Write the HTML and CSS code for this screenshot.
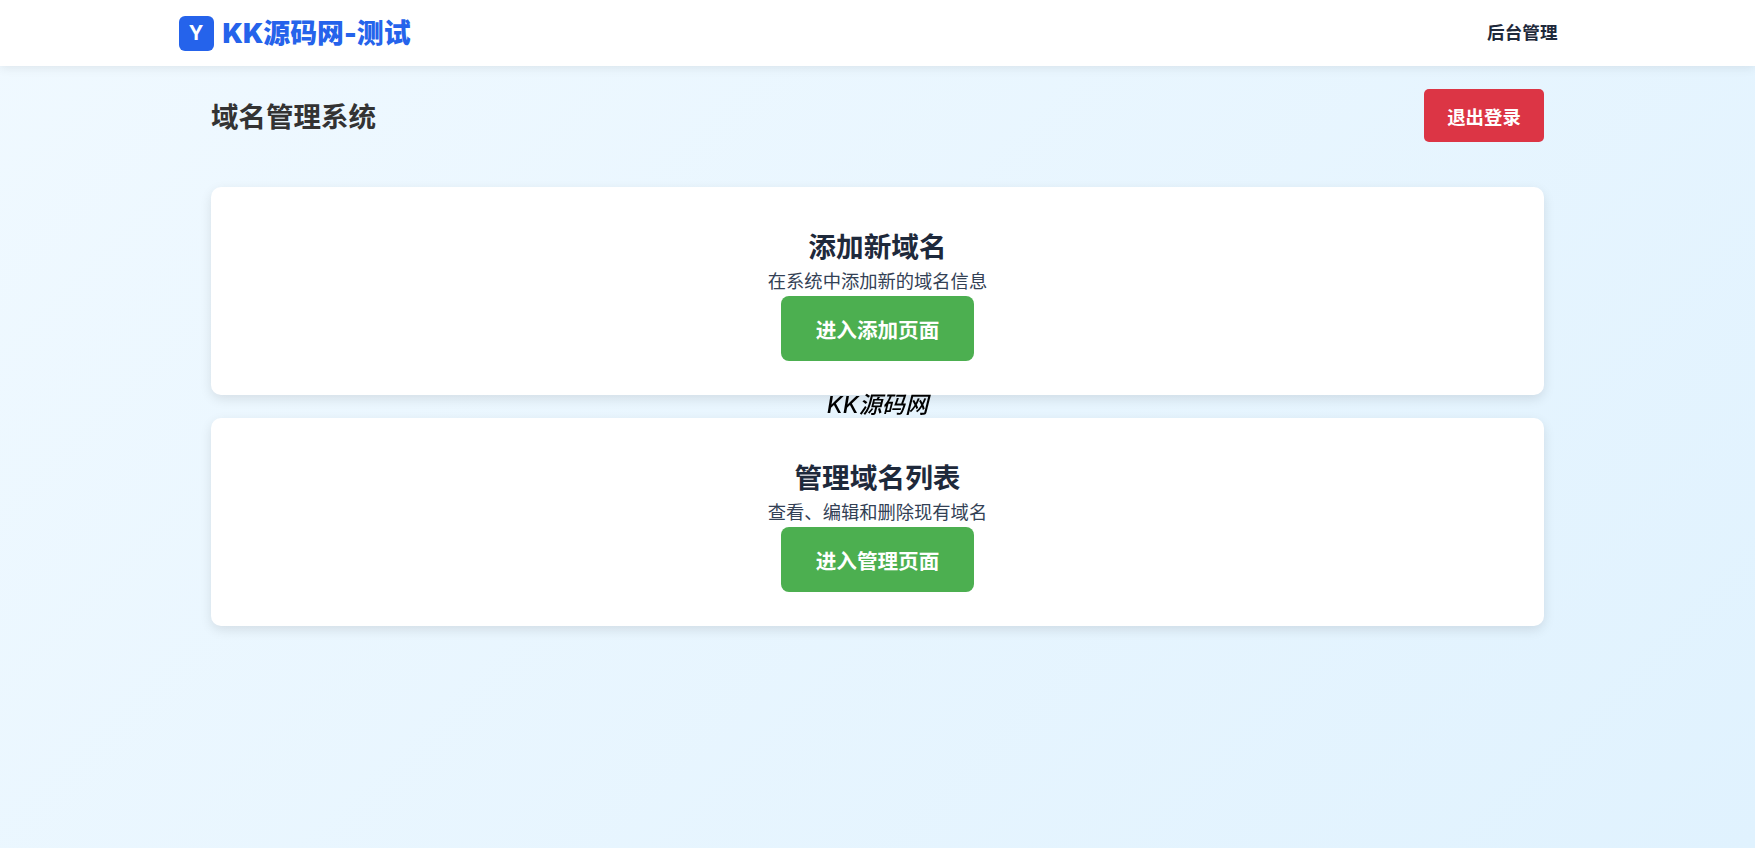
FILE: index.html
```html
<!DOCTYPE html>
<html lang="zh-CN">
<head>
    <meta charset="UTF-8">
    <meta name="viewport" content="width=device-width, initial-scale=1.0">
    <title>域名管理系统</title>
    <link rel="stylesheet" href="styles.css">
</head>
<body>
    <header class="site-header">
        <div class="site-header-inner">
            <a class="logo" href="#">
                <span class="logo-mark">Y</span>
                <span class="logo-text">KK源码网-测试</span>
            </a>
            <a class="nav-link" href="#">后台管理</a>
        </div>
    </header>

    <main class="container">
        <div class="page-head">
            <h1>域名管理系统</h1>
            <a class="btn-logout" href="#">退出登录</a>
        </div>

        <section class="card">
            <h2>添加新域名</h2>
            <p>在系统中添加新的域名信息</p>
            <a class="btn-enter" href="#">进入添加页面</a>
        </section>

        <section class="card">
            <h2>管理域名列表</h2>
            <p>查看、编辑和删除现有域名</p>
            <a class="btn-enter" href="#">进入管理页面</a>
        </section>
    </main>

    <div class="watermark">KK源码网</div>
</body>
</html>
```

FILE: styles.css
```css
* {
    box-sizing: border-box;
}

body {
    margin: 0;
    min-height: 100vh;
    font-family: Inter, "Noto Sans CJK SC", sans-serif;
    background: linear-gradient(135deg, #f0f9ff, #e0f2fe);
    color: #1e293b;
    overflow: hidden;
}

a {
    text-decoration: none;
}

.site-header {
    height: 66px;
    background-color: #ffffff;
    box-shadow: 0 2px 10px rgba(0, 0, 0, 0.08);
}

.site-header-inner {
    max-width: 1400px;
    height: 100%;
    margin: 0 auto;
    padding: 0 20px 0 1px;
    display: flex;
    align-items: center;
    justify-content: space-between;
}

.logo {
    display: flex;
    align-items: center;
    gap: 9px;
}

.logo-mark {
    width: 35px;
    height: 35px;
    border-radius: 6px;
    background-color: #2563eb;
    color: #ffffff;
    font-size: 20px;
    font-weight: 700;
    display: flex;
    align-items: center;
    justify-content: center;
}

.logo-text {
    font-size: 26.9px;
    line-height: 34px;
    font-weight: 900;
    color: #2563eb;
}

.nav-link {
    padding-bottom: 4px;
    font-size: 17.6px;
    font-weight: 600;
    color: #1e293b;
}

.container {
    width: 1333px;
    margin: 0 auto;
}

.page-head {
    display: flex;
    align-items: center;
    justify-content: space-between;
    padding-top: 23px;
    margin-bottom: 45px;
}

.page-head h1 {
    margin: 0 0 2px;
    font-size: 27.5px;
    font-weight: 700;
    color: #333333;
}

.btn-logout {
    width: 120px;
    height: 53px;
    border-radius: 5px;
    background-color: #dc3545;
    color: #ffffff;
    font-size: 18.4px;
    font-weight: 700;
    display: flex;
    align-items: center;
    justify-content: center;
}

.card {
    height: 208px;
    margin-bottom: 23px;
    padding-top: 42px;
    border-radius: 10px;
    background-color: #ffffff;
    box-shadow: 0 4px 12px rgba(0, 0, 0, 0.1);
    display: flex;
    flex-direction: column;
    align-items: center;
}

.card h2 {
    margin: 0;
    font-size: 27.7px;
    line-height: 36px;
    font-weight: 700;
    color: #1e293b;
}

.card p {
    margin: 0;
    padding-top: 2px;
    font-size: 18.3px;
    line-height: 29px;
    color: #334155;
}

.btn-enter {
    width: 193px;
    height: 65px;
    border-radius: 8px;
    background-color: #4caf50;
    color: #ffffff;
    font-size: 20.6px;
    font-weight: 700;
    display: flex;
    align-items: center;
    justify-content: center;
}

/* sits over the page, centred in the window */
.watermark {
    position: fixed;
    top: 50%;
    left: 50%;
    transform: translate(-50%, -50%) translateY(-21px);
    font-size: 23.2px;
    font-weight: 500;
    font-style: italic;
    color: #000000;
    white-space: nowrap;
    pointer-events: none;
}
```
